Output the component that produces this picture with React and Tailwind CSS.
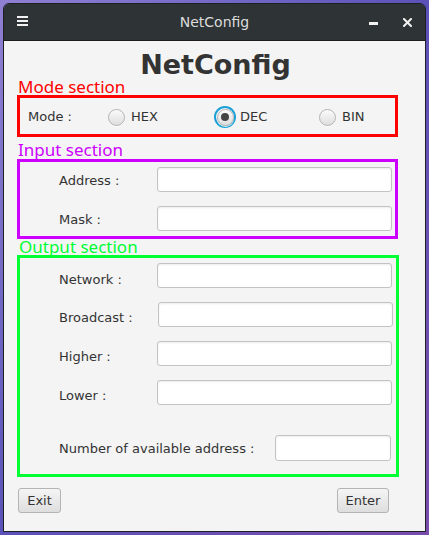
import React, { useState } from "react";

const Radio = ({ label, checked, onClick, width }) => (
  <div className="flex items-center" style={{ width }} onClick={onClick}>
    <div
      className={`flex items-center justify-center w-[18px] h-[18px] rounded-full ${
        checked ? "ring-2 ring-[#1ba1d8]" : ""
      }`}
    >
      <div className="flex items-center justify-center w-[17px] h-[17px] rounded-full border border-[#b3b3b3] bg-gradient-to-b from-[#fbfbfb] to-[#dedede] shadow-[0_1px_0_rgba(255,255,255,0.8)]">
        {checked && <div className="w-[8px] h-[8px] rounded-full bg-[#444]" />}
      </div>
    </div>
    <span className="ml-[6px] text-[13px] leading-[16px] text-[#333]">{label}</span>
  </div>
);

const Field = ({ label, labelWidth = 137, pt = 6, inputWidth = 235, h = 25 }) => (
  <div className="flex items-start">
    <span
      className="shrink-0 pl-[39px] text-[13px] leading-[16px] text-[#333]"
      style={{ width: labelWidth, paddingTop: pt }}
    >
      {label}
    </span>
    <input
      className="shrink-0 rounded-[3px] border border-[#c3c3c3] bg-white outline-none shadow-[inset_0_1px_2px_rgba(0,0,0,0.08)]"
      style={{ width: inputWidth, height: h }}
    />
  </div>
);

export default function App() {
  const [mode, setMode] = useState("DEC");

  return (
    <div className="w-[429px] h-[535px] overflow-hidden bg-gradient-to-br from-[#8f80d2] via-[#5b52b9] to-[#7a4cae] pt-[3px] pl-[3px] font-['DejaVu_Sans',sans-serif]">
      <div className="w-[423px] h-[529px] flex flex-col rounded-t-[6px] border border-[#1d2021] overflow-hidden">
        {/* Title bar */}
        <div className="relative h-[37px] shrink-0 flex items-center justify-center bg-[#2e3335] border-b border-[#1b1d1e]">
          <svg className="absolute left-[13px] top-[12px]" width="11" height="10" viewBox="0 0 11 10">
            <rect x="0" y="0" width="11" height="2" fill="#f2f2f2" />
            <rect x="0" y="4" width="11" height="2" fill="#f2f2f2" />
            <rect x="0" y="8" width="11" height="2" fill="#f2f2f2" />
          </svg>
          <span className="text-[14px] leading-[16px] text-[#dcdcdc]">NetConfig</span>
          <svg className="absolute left-[365px] top-[18px]" width="9" height="3" viewBox="0 0 9 3">
            <rect x="0" y="0" width="9" height="3" fill="#f2f2f2" />
          </svg>
          <svg className="absolute left-[399px] top-[14px]" width="9" height="9" viewBox="0 0 9 9">
            <path d="M1 1 L8 8 M8 1 L1 8" stroke="#f2f2f2" strokeWidth="2" strokeLinecap="square" />
          </svg>
        </div>

        {/* Content */}
        <div className="flex-1 bg-[#f4f4f4] pt-[11px] flex flex-col">
          <h1 className="text-center text-[27px] leading-[26px] font-bold text-[#333] pl-[2px]">NetConfig</h1>

          {/* Mode section */}
          <div className="ml-[14px] h-[17px] text-[17px] leading-[17px] text-[#ff0000] font-['Noto_Sans',sans-serif]">
            Mode section
          </div>
          <div className="ml-[13px] w-[381px] h-[42px] border-[3px] border-[#ff0000] flex items-center pl-[8px] pt-[2px]">
            <span className="w-[79px] text-[13px] leading-[16px] text-[#333]">Mode :</span>
            <Radio label="HEX" width={109} checked={mode === "HEX"} onClick={() => setMode("HEX")} />
            <Radio label="DEC" width={102} checked={mode === "DEC"} onClick={() => setMode("DEC")} />
            <Radio label="BIN" width={60} checked={mode === "BIN"} onClick={() => setMode("BIN")} />
          </div>

          {/* Input section */}
          <div className="mt-[4px] ml-[14px] h-[17px] text-[17px] leading-[17px] text-[#cc00ff] font-['Noto_Sans',sans-serif]">
            Input section
          </div>
          <div className="mt-[1px] ml-[13px] w-[381px] h-[80px] border-[3px] border-[#cc00ff] flex flex-col gap-[14px] pt-[5px]">
            <Field label="Address :" pt={6} />
            <Field label="Mask :" pt={6} />
          </div>

          {/* Output section */}
          <div className="ml-[15px] h-[16px] text-[17px] leading-[16px] text-[#00ff33] font-['Noto_Sans',sans-serif]">
            Output section
          </div>
          <div className="ml-[13px] w-[382px] h-[222px] border-[3px] border-[#00ff33] flex flex-col pt-[5px]">
            <div className="flex flex-col gap-[14px]">
              <Field label="Network :" pt={9} />
              <Field label="Broadcast :" labelWidth={138} pt={8} />
              <Field label="Higher :" pt={8} />
              <Field label="Lower :" pt={8} />
            </div>
            <div className="mt-[30px]">
              <Field label="Number of available address :" labelWidth={255} pt={6} inputWidth={116} h={26} />
            </div>
          </div>

          {/* Buttons */}
          <div className="mt-[11px] flex justify-between pl-[14px] pr-[36px]">
            <button className="w-[43px] h-[25px] rounded-[3px] border border-[#b4b4b4] bg-gradient-to-b from-[#f5f5f5] to-[#dedede] text-[13px] leading-[16px] text-[#333]">
              Exit
            </button>
            <button className="w-[52px] h-[25px] rounded-[3px] border border-[#b4b4b4] bg-gradient-to-b from-[#f5f5f5] to-[#dedede] text-[13px] leading-[16px] text-[#333]">
              Enter
            </button>
          </div>
        </div>
      </div>
    </div>
  );
}
